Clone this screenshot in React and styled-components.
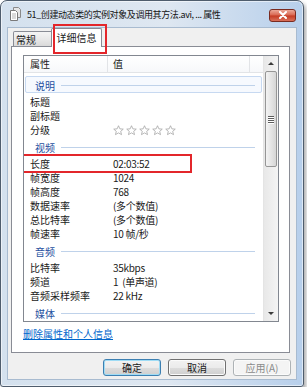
import styled, { createGlobalStyle } from 'styled-components';

const GlobalStyle = createGlobalStyle`
  html, body {
    margin: 0;
    padding: 0;
    background: #ffffff;
  }
  body {
    font-family: "Noto Sans CJK SC", "Liberation Sans", sans-serif;
    font-size: 10px;
    color: #1a1a1a;
  }
`;

/* Window frame */
const Window = styled.div`
  box-sizing: border-box;
  width: 304px;
  height: 387px;
  display: flex;
  flex-direction: column;
  border: 1px solid #4f5d6d;
  border-radius: 7px 7px 3px 3px;
  background: linear-gradient(90deg, #d4e1ee 0%, #dee7f1 55%, #b7cfeb 100%);
  box-shadow: inset 0 0 0 1px rgba(255, 255, 255, 0.55), 2px 3px 4px rgba(0, 0, 0, 0.35);
`;

const TitleBar = styled.div`
  height: 26px;
  display: flex;
  align-items: center;
  padding: 0 7px 0 8px;
`;

const Title = styled.div`
  flex: 1;
  margin-left: 5px;
  font-size: 9px;
  letter-spacing: -0.4px;
  white-space: nowrap;
  color: #141414;
`;

const CloseButton = styled.div`
  box-sizing: border-box;
  width: 27px;
  height: 13px;
  margin-top: 2px;
  display: flex;
  align-items: center;
  justify-content: center;
  border: 1px solid #7a2b20;
  border-radius: 3px;
  background: linear-gradient(#eba898 0%, #d9654f 48%, #c43a22 52%, #d9705a 100%);
`;

const Client = styled.div`
  flex: 1;
  margin: 0 6px 6px;
  display: flex;
  flex-direction: column;
  padding: 0 6px 3px 3px;
  border: 1px solid #a8bbd0;
  background: #f0f0f0;
`;

/* Tabs */
const TabRow = styled.div`
  position: relative;
  z-index: 1;
  height: 19px;
  display: flex;
  align-items: flex-end;
  padding-left: 2px;
`;

const Tab = styled.div`
  position: relative;
  box-sizing: border-box;
  border: 1px solid #898c95;
  border-bottom: none;
  border-radius: 2px 2px 0 0;
  white-space: nowrap;
  ${(p) =>
    p.$active
      ? `
    width: 51px;
    height: 19px;
    margin-left: -2px;
    line-height: 17px;
    text-align: center;
    background: #ffffff;
  `
      : `
    width: 40px;
    height: 15px;
    margin-bottom: 1px;
    padding-left: 2px;
    line-height: 15px;
    background: linear-gradient(#f4f4f4 0%, #e9e9e9 50%, #d9d9d9 100%);
  `}

  ${(p) =>
    p.$marked &&
    `
    &::after {
      content: '';
      position: absolute;
      left: 1px;
      top: -5px;
      width: 54px;
      height: 30px;
      box-sizing: border-box;
      border: 2px solid #e3262b;
    }
  `}
`;

const Panel = styled.div`
  box-sizing: border-box;
  height: 307px;
  margin-top: -1px;
  display: flex;
  flex-direction: column;
  padding: 8px 0 0 11px;
  border: 1px solid #898c95;
  background: #ffffff;
`;

/* Property list */
const List = styled.div`
  box-sizing: border-box;
  width: 256px;
  height: 267px;
  display: flex;
  border: 1px solid #828790;
  overflow: hidden;
`;

const ListMain = styled.div`
  flex: 1;
  display: flex;
  flex-direction: column;
`;

const Header = styled.div`
  height: 16px;
  display: grid;
  grid-template-columns: 84px 142px 1fr;
  border-bottom: 1px solid #e2e4e7;
  background: linear-gradient(#ffffff, #f7f8fa);
`;

const HeaderCell = styled.div`
  line-height: 16px;
  padding-left: ${(p) => p.$pad ?? 6}px;
  border-right: ${(p) => (p.$last ? 'none' : '1px solid #e2e4e7')};
`;

const Body = styled.div`
  padding-top: 2px;
`;

const GroupHeader = styled.div`
  position: relative;
  height: 20px;
  display: flex;
  align-items: center;
  padding-left: 11px;
  color: #1f4f9e;

  ${(p) =>
    p.$focused &&
    `
    &::before {
      content: '';
      position: absolute;
      left: 1px;
      right: 1px;
      top: 1px;
      bottom: 2px;
      border: 1px solid #c7d9f1;
      border-radius: 2px;
      background: #f6f9fe;
    }
  `}
`;

const GroupLabel = styled.span`
  position: relative;
`;

const GroupLine = styled.div`
  position: relative;
  flex: 1;
  height: 1px;
  margin: 1px 8px 0 6px;
  background: #bfd2ea;
`;

const Row = styled.div`
  position: relative;
  height: 14px;
  display: grid;
  grid-template-columns: 89px 1fr;
  line-height: 14px;
  white-space: nowrap;

  ${(p) =>
    p.$marked &&
    `
    &::after {
      content: '';
      position: absolute;
      left: -2px;
      top: -3px;
      width: 170px;
      height: 19px;
      box-sizing: border-box;
      border: 2px solid #e3262b;
    }
  `}
`;

const Label = styled.span`
  padding-left: 6px;
`;

const Value = styled.span`
  letter-spacing: -0.3px;
  white-space: pre;
`;

const Stars = styled.span`
  display: inline-flex;
  align-items: center;
  gap: 2px;
  height: 14px;
`;

/* Scrollbar */
const ScrollBar = styled.div`
  width: 14px;
  display: flex;
  flex-direction: column;
  align-items: stretch;
  border-left: 1px solid #e4e4e4;
  background: linear-gradient(90deg, #e8e8e8, #f4f4f4);
`;

const ArrowButton = styled.div`
  height: 15px;
  display: flex;
  align-items: center;
  justify-content: center;

  &::before {
    content: '';
    border-left: 3px solid transparent;
    border-right: 3px solid transparent;
    ${(p) =>
      p.$down ? 'border-top: 3px solid #3b3b3b;' : 'border-bottom: 3px solid #3b3b3b;'}
  }
`;

const Thumb = styled.div`
  box-sizing: border-box;
  height: 96px;
  margin: 0 1px;
  display: flex;
  flex-direction: column;
  align-items: center;
  justify-content: center;
  gap: 1px;
  border: 1px solid #969696;
  border-radius: 2px;
  background: linear-gradient(90deg, #f3f3f3, #e2e2e2 60%, #d6d6d6);
`;

const Grip = styled.div`
  width: 6px;
  height: 1px;
  background: #5c5c5c;
  box-shadow: 0 1px 0 #ffffff;
`;

const Track = styled.div`
  flex: 1;
`;

const Link = styled.a`
  margin-top: 6px;
  line-height: 12px;
  color: #0066cc;
  text-decoration: underline;
  cursor: pointer;
`;

/* Footer buttons */
const Footer = styled.div`
  display: flex;
  justify-content: flex-end;
  gap: 7px;
  margin: 6px -1px 0 0;
`;

const Button = styled.button`
  box-sizing: border-box;
  width: 58px;
  height: 17px;
  padding: 0;
  font-family: inherit;
  font-size: 10px;
  line-height: 15px;
  color: ${(p) => (p.disabled ? '#8a8a8a' : '#1a1a1a')};
  border: 1px solid ${(p) => (p.$primary ? '#3c7fb1' : p.disabled ? '#adb2b5' : '#707070')};
  border-radius: 3px;
  background: ${(p) =>
    p.disabled
      ? '#f4f4f4'
      : 'linear-gradient(#f2f2f2 0%, #ebebeb 50%, #dddddd 51%, #cfcfcf 100%)'};
  box-shadow: ${(p) => (p.$primary ? 'inset 0 0 0 1px #9fdcf5' : 'inset 0 0 0 1px #fbfbfb')};
`;

function DocIcon() {
  return (
    <svg width="13" height="14" viewBox="0 0 13 14">
      <path d="M4.5 0.5h5l2 2v8h-7z" fill="#e6e6e6" stroke="#8a8a8a" />
      <path d="M1.5 3.5h5l2 2v8h-7z" fill="#ffffff" stroke="#7a7a7a" />
      <path d="M3 7h4M3 9h4M3 11h4" stroke="#b5b5b5" />
    </svg>
  );
}

function CloseIcon() {
  return (
    <svg width="10" height="8" viewBox="0 0 10 8">
      <path d="M2 1l6 6M8 1l-6 6" stroke="#ffffff" strokeWidth="2" strokeLinecap="round" />
    </svg>
  );
}

function Star() {
  return (
    <svg width="11" height="11" viewBox="0 0 12 12">
      <path
        d="M6 0.8l1.5 3.4 3.7 0.3-2.8 2.4 0.9 3.6L6 8.6 2.7 10.5l0.9-3.6L0.8 4.5l3.7-0.3z"
        fill="#ffffff"
        stroke="#a9a9a9"
        strokeWidth="0.9"
        strokeLinejoin="round"
      />
    </svg>
  );
}

const groups = [
  {
    title: '说明',
    focused: true,
    rows: [
      { label: '标题', value: '' },
      { label: '副标题', value: '' },
      { label: '分级', stars: true },
    ],
  },
  {
    title: '视频',
    rows: [
      { label: '长度', value: '02:03:52', marked: true },
      { label: '帧宽度', value: '1024' },
      { label: '帧高度', value: '768' },
      { label: '数据速率', value: '(多个数值)' },
      { label: '总比特率', value: '(多个数值)' },
      { label: '帧速率', value: '10 帧/秒' },
    ],
  },
  {
    title: '音频',
    rows: [
      { label: '比特率', value: '35kbps' },
      { label: '频道', value: '1  (单声道)' },
      { label: '音频采样频率', value: '22 kHz' },
    ],
  },
  { title: '媒体', rows: [] },
];

export default function App() {
  return (
    <>
      <GlobalStyle />
      <Window>
        <TitleBar>
          <DocIcon />
          <Title>51_创建动态类的实例对象及调用其方法.avi, ... 属性</Title>
          <CloseButton>
            <CloseIcon />
          </CloseButton>
        </TitleBar>

        <Client>
          <TabRow>
            <Tab>常规</Tab>
            <Tab $active $marked>
              详细信息
            </Tab>
          </TabRow>

          <Panel>
            <List>
              <ListMain>
                <Header>
                  <HeaderCell>属性</HeaderCell>
                  <HeaderCell $pad={5}>值</HeaderCell>
                  <HeaderCell $last />
                </Header>
                <Body>
                  {groups.map((g) => (
                    <div key={g.title}>
                      <GroupHeader $focused={g.focused}>
                        <GroupLabel>{g.title}</GroupLabel>
                        <GroupLine />
                      </GroupHeader>
                      {g.rows.map((r) => (
                        <Row key={r.label} $marked={r.marked}>
                          <Label>{r.label}</Label>
                          {r.stars ? (
                            <Stars>
                              {[0, 1, 2, 3, 4].map((i) => (
                                <Star key={i} />
                              ))}
                            </Stars>
                          ) : (
                            <Value>{r.value}</Value>
                          )}
                        </Row>
                      ))}
                    </div>
                  ))}
                </Body>
              </ListMain>
              <ScrollBar>
                <ArrowButton />
                <Thumb>
                  <Grip />
                  <Grip />
                  <Grip />
                  <Grip />
                </Thumb>
                <Track />
                <ArrowButton $down />
              </ScrollBar>
            </List>
            <Link>删除属性和个人信息</Link>
          </Panel>

          <Footer>
            <Button $primary>确定</Button>
            <Button>取消</Button>
            <Button disabled>应用(A)</Button>
          </Footer>
        </Client>
      </Window>
    </>
  );
}
